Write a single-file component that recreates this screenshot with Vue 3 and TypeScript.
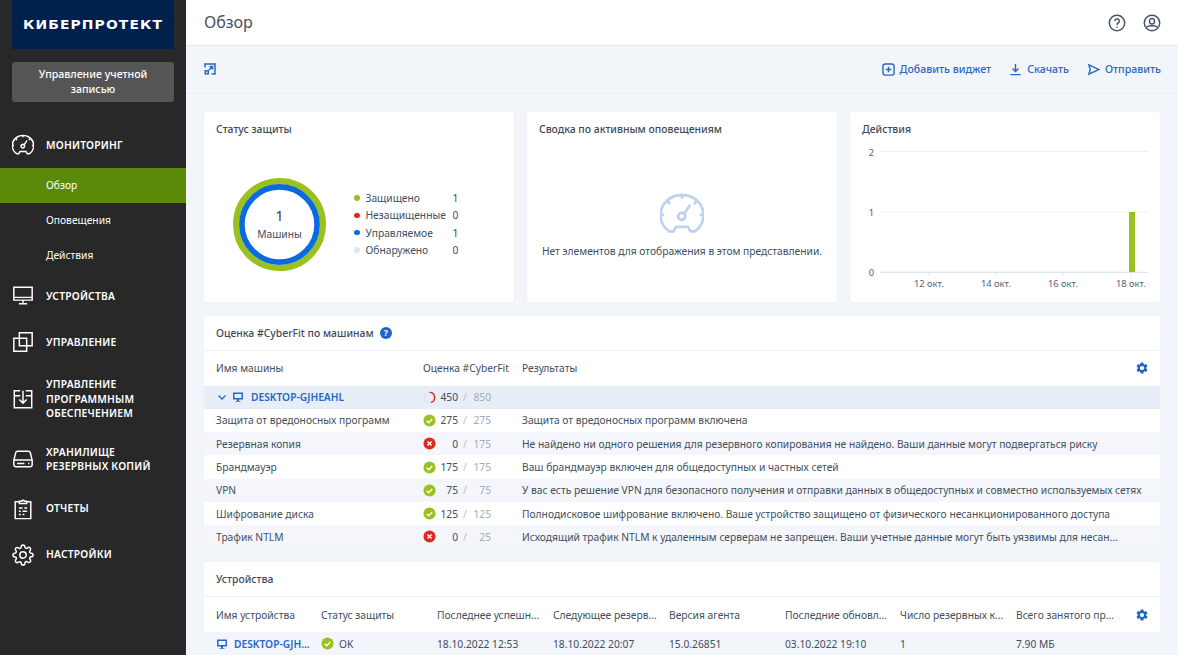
<script setup lang="ts">
const gearOutline =
  'M19.4 15a1.65 1.65 0 0 0 .33 1.82l.06.06a2 2 0 0 1 0 2.83 2 2 0 0 1-2.83 0l-.06-.06a1.65 1.65 0 0 0-1.82-.33 1.65 1.65 0 0 0-1 1.51V21a2 2 0 0 1-2 2 2 2 0 0 1-2-2v-.09A1.65 1.65 0 0 0 9 19.4a1.65 1.65 0 0 0-1.82.33l-.06.06a2 2 0 0 1-2.83 0 2 2 0 0 1 0-2.83l.06-.06a1.65 1.65 0 0 0 .33-1.82 1.65 1.65 0 0 0-1.51-1H3a2 2 0 0 1-2-2 2 2 0 0 1 2-2h.09A1.65 1.65 0 0 0 4.6 9a1.65 1.65 0 0 0-.33-1.82l-.06-.06a2 2 0 0 1 0-2.83 2 2 0 0 1 2.83 0l.06.06a1.65 1.65 0 0 0 1.82.33H9a1.65 1.65 0 0 0 1-1.51V3a2 2 0 0 1 2-2 2 2 0 0 1 2 2v.09a1.65 1.65 0 0 0 1 1.51 1.65 1.65 0 0 0 1.82-.33l.06-.06a2 2 0 0 1 2.83 0 2 2 0 0 1 0 2.83l-.06.06a1.65 1.65 0 0 0-.33 1.82V9a1.65 1.65 0 0 0 1.51 1H21a2 2 0 0 1 2 2 2 2 0 0 1-2 2h-.09a1.65 1.65 0 0 0-1.51 1z M15.5 12a3.5 3.5 0 1 1-7 0 3.5 3.5 0 0 1 7 0z'
const gearSolid =
  'M19.14 12.94c.04-.3.06-.61.06-.94 0-.32-.02-.64-.07-.94l2.03-1.58a.49.49 0 0 0 .12-.61l-1.92-3.32a.488.488 0 0 0-.59-.22l-2.39.96c-.5-.38-1.03-.7-1.62-.94l-.36-2.54a.484.484 0 0 0-.48-.41h-3.84c-.24 0-.43.17-.47.41l-.36 2.54c-.59.24-1.13.57-1.62.94l-2.39-.96c-.22-.08-.47 0-.59.22L2.74 8.87c-.12.21-.08.47.12.61l2.03 1.58c-.05.3-.09.63-.09.94s.02.64.07.94l-2.03 1.58a.49.49 0 0 0-.12.61l1.92 3.32c.12.22.37.29.59.22l2.39-.96c.5.38 1.03.7 1.62.94l.36 2.54c.05.24.24.41.48.41h3.84c.24 0 .44-.17.47-.41l.36-2.54c.59-.24 1.13-.56 1.62-.94l2.39.96c.22.08.47 0 .59-.22l1.92-3.32c.12-.22.07-.47-.12-.61l-2.01-1.58zM12 15.6c-1.98 0-3.6-1.62-3.6-3.6s1.62-3.6 3.6-3.6 3.6 1.62 3.6 3.6-1.62 3.6-3.6 3.6z'
const gauge =
  'M5 21.5C2.2 19.6.3 16 .3 12.5.3 6.5 5.5 1.5 12 1.5S23.7 6.5 23.7 12.5c0 3.5-1.9 7.1-4.7 9h-2.300L15.200 19H8.800l-1.500 2.500z M10.200 14.300a1.900 1.900 0 1 0 2.900-2.400 1.900 1.900 0 0 0-2.900 2.400z M13.200 11.900l3.300-4.900 M12 1.500v2 M.3 12.500h2 M21.700 12.500h2 M4 5l1.500 1.500 M20 5l-1.500 1.500'
const monitor = 'M2 2.500h20v14H2z M2 13.500h20 M12 16.500v4 M7.500 20.500h9'

interface NavItem {
  lines: string[]
  icon: string
  children?: { label: string; active?: boolean }[]
}

const nav: NavItem[] = [
  {
    lines: ['МОНИТОРИНГ'],
    icon: gauge,
    children: [{ label: 'Обзор', active: true }, { label: 'Оповещения' }, { label: 'Действия' }],
  },
  { lines: ['УСТРОЙСТВА'], icon: monitor },
  { lines: ['УПРАВЛЕНИЕ'], icon: 'M8 2h14v14H8z M2 8h14v14H2z' },
  {
    lines: ['УПРАВЛЕНИЕ', 'ПРОГРАММНЫМ', 'ОБЕСПЕЧЕНИЕМ'],
    icon: 'M9 3H2.500v18.500h19V3H15 M2.500 8.500H9 M15 8.500h6.500 M12 3v13 M8 12.500l4 4 4-4',
  },
  {
    lines: ['ХРАНИЛИЩЕ', 'РЕЗЕРВНЫХ КОПИЙ'],
    icon: 'M6 3.500h12c1 0 1.600.5 1.900 1.400L22 13.500v4.500a2.500 2.500 0 0 1-2.500 2.500h-15A2.500 2.500 0 0 1 2 18v-4.500l2.100-8.600C4.400 4 5 3.500 6 3.500z M2.500 13h19 M5.500 16.800h8 M17.500 16.800h1.500',
  },
  {
    lines: ['ОТЧЕТЫ'],
    icon: 'M8 4H3.500v18.500h17V4H16 M8 6V3.500h2.500a1.600 1.600 0 0 1 3 0H16V6z M7.500 11h4 M13.500 11h3 M7.500 14.500h2 M11.500 14.500h5 M7.500 18h2 M11.500 18h2',
  },
  { lines: ['НАСТРОЙКИ'], icon: gearOutline },
]

const legend = [
  { label: 'Защищено', value: 1, color: '#9ac120' },
  { label: 'Незащищенные', value: 0, color: '#e0281f' },
  { label: 'Управляемое', value: 1, color: '#0a6be0' },
  { label: 'Обнаружено', value: 0, color: '#dfe6f2' },
]

const gridY = [
  { y: 151.5, label: '2' },
  { y: 212, label: '1' },
  { y: 272, label: '0' },
]
const ticks = [
  { x: 59, label: '12 окт.' },
  { x: 126, label: '14 окт.' },
  { x: 193, label: '16 окт.' },
  { x: 261, label: '18 окт.' },
]

const checks = [
  { name: 'Защита от вредоносных программ', ok: true, score: 275, total: 275, result: 'Защита от вредоносных программ включена' },
  { name: 'Резервная копия', ok: false, score: 0, total: 175, result: 'Не найдено ни одного решения для резервного копирования не найдено. Ваши данные могут подвергаться риску' },
  { name: 'Брандмауэр', ok: true, score: 175, total: 175, result: 'Ваш брандмауэр включен для общедоступных и частных сетей' },
  { name: 'VPN', ok: true, score: 75, total: 75, result: 'У вас есть решение VPN для безопасного получения и отправки данных в общедоступных и совместно используемых сетях' },
  { name: 'Шифрование диска', ok: true, score: 125, total: 125, result: 'Полнодисковое шифрование включено. Ваше устройство защищено от физического несанкционированного доступа' },
  { name: 'Трафик NTLM', ok: false, score: 0, total: 25, result: 'Исходящий трафик NTLM к удаленным серверам не запрещен. Ваши учетные данные могут быть уязвимы для несан...' },
]

const deviceCols = [
  'Имя устройства',
  'Статус защиты',
  'Последнее успешн...',
  'Следующее резерв...',
  'Версия агента',
  'Последние обновл...',
  'Число резервных к...',
  'Всего занятого пр...',
]
</script>

<template>
  <div class="app">
    <aside class="sidebar">
      <div class="logo"><span>КИБЕРПРОТЕКТ</span></div>
      <button class="account">Управление учетной записью</button>
      <nav class="nav">
        <template v-for="item in nav" :key="item.lines[0] + item.lines.length">
          <div class="nav-item">
            <svg class="nav-icon" viewBox="0 0 24 24"><path :d="item.icon" /></svg>
            <div class="nav-label">
              <div v-for="line in item.lines" :key="line">{{ line }}</div>
            </div>
          </div>
          <div
            v-for="child in item.children"
            :key="child.label"
            class="nav-child"
            :class="{ active: child.active }"
          >
            {{ child.label }}
          </div>
        </template>
      </nav>
    </aside>

    <main class="main">
      <header class="topbar">
        <h1 class="page-title">Обзор</h1>
        <div class="top-icons">
          <svg class="top-icon" viewBox="0 0 18 18">
            <circle cx="9" cy="9" r="7.700" />
            <path d="M6.700 7a2.300 2.300 0 1 1 3.500 2c-.8.500-1.200 1-1.200 1.900" />
            <path d="M9 12.600v1.200" />
          </svg>
          <svg class="top-icon" viewBox="0 0 18 18">
            <circle cx="9" cy="9" r="7.700" />
            <path d="M6.500 7a2.500 2.500 0 1 1 5 0c0 1.800-1 3-2.500 3S6.500 8.800 6.500 7z" />
            <path d="M3.500 13.500c.6-1.200 2-1.500 3.500-1.700h4c1.500.2 2.900.5 3.500 1.700" />
          </svg>
        </div>
      </header>

      <div class="toolbar">
        <svg class="expand" viewBox="0 0 12 12">
          <path d="M1 4.500V1h10v10H7.500" />
          <path d="M5 7l3.500-3.500 M5.500 3.500h3v3" />
          <path class="solid" d="M.500 7h4.500v4.500H.500z M2 8.500v1.500h1.500V8.500z" />
        </svg>
        <div class="actions">
          <a class="action">
            <svg viewBox="0 0 14 14"><rect x="1" y="1" width="12" height="12" rx="2.500" /><path d="M7 4v6 M4 7h6" /></svg>
            Добавить виджет
          </a>
          <a class="action">
            <svg viewBox="0 0 14 14"><path d="M7 1v8 M3.800 6L7 9.200 10.200 6 M1.500 12.500h11" /></svg>
            Скачать
          </a>
          <a class="action">
            <svg viewBox="0 0 14 14"><path d="M2 2l11 5-11 5 1.500-5z" /></svg>
            Отправить
          </a>
        </div>
      </div>

      <div class="content">
        <div class="widgets">
          <section class="card">
            <h2 class="card-title">Статус защиты</h2>
            <div class="status-body">
              <div class="donut">
                <svg viewBox="0 0 93 93">
                  <circle cx="46.500" cy="46.500" r="43.400" fill="none" stroke="#9ac120" stroke-width="6.200" />
                  <circle cx="46.500" cy="46.500" r="37.600" fill="none" stroke="#0a6be0" stroke-width="5.600" />
                </svg>
                <div class="donut-text">
                  <span class="donut-num">1</span>
                  <span>Машины</span>
                </div>
              </div>
              <ul class="legend">
                <li v-for="row in legend" :key="row.label">
                  <i class="dot" :style="{ background: row.color }"></i>
                  <span class="legend-label">{{ row.label }}</span>
                  <span>{{ row.value }}</span>
                </li>
              </ul>
            </div>
          </section>

          <section class="card">
            <h2 class="card-title">Сводка по активным оповещениям</h2>
            <div class="empty">
              <svg viewBox="0 0 24 24"><path :d="gauge" /></svg>
              <p>Нет элементов для отображения в этом представлении.</p>
            </div>
          </section>

          <section class="card">
            <h2 class="card-title">Действия</h2>
            <svg class="chart" viewBox="0 0 310 156">
              <g v-for="g in gridY" :key="g.label">
                <line x1="30" :y1="g.y - 146" x2="298" :y2="g.y - 146" class="grid-line" />
                <text x="24" :y="g.y - 142" text-anchor="end">{{ g.label }}</text>
              </g>
              <line x1="30" y1="126.500" x2="298" y2="126.500" class="axis" />
              <rect x="279" y="66" width="6" height="60" fill="#9ac120" />
              <g v-for="t in ticks" :key="t.label">
                <line :x1="t.x + 20" y1="126" :x2="t.x + 20" y2="130" class="axis" />
                <text :x="t.x + 20" y="141" text-anchor="middle">{{ t.label }}</text>
              </g>
            </svg>
          </section>
        </div>

        <section class="card table-card">
          <h2 class="table-title">
            Оценка #CyberFit по машинам
            <svg class="help" viewBox="0 0 12 12">
              <circle cx="6" cy="6" r="6" fill="#1f66c4" />
              <text x="6" y="9" text-anchor="middle">?</text>
            </svg>
          </h2>
          <div class="fit-row fit-head">
            <span>Имя машины</span>
            <span>Оценка #CyberFit</span>
            <span>Результаты</span>
            <svg class="gear" viewBox="0 0 24 24"><path :d="gearSolid" /></svg>
          </div>
          <div class="fit-row fit-machine">
            <span class="machine-name">
              <svg class="chevron" viewBox="0 0 10 10"><path d="M1.500 3.500L5 7l3.500-3.500" /></svg>
              <svg class="pc" viewBox="0 0 24 24"><path d="M2 3h20v14H2z M5 6v8h14V6z M10 17h4v3h3v1.500H7V20h3z" /></svg>
              DESKTOP-GJHEAHL
            </span>
            <span class="score">
              <svg class="status" viewBox="0 0 14 14">
                <circle cx="7" cy="7" r="5.500" fill="none" stroke="#dbe3f0" stroke-width="1.500" />
                <path d="M7 1.500a5.500 5.500 0 0 1 1.500 10.800" fill="none" stroke="#e0281f" stroke-width="1.500" />
              </svg>
              <b>450</b><i>/</i><em>850</em>
            </span>
            <span></span>
          </div>
          <div v-for="c in checks" :key="c.name" class="fit-row fit-check">
            <span>{{ c.name }}</span>
            <span class="score">
              <svg class="status" viewBox="0 0 14 14">
                <circle cx="7" cy="7" r="6.500" :fill="c.ok ? '#9ac120' : '#e0281f'" />
                <path v-if="c.ok" d="M4 7.200l2.200 2.200L10 5.500" class="mark" />
                <path v-else d="M4.800 4.800l4.400 4.400 M9.200 4.800l-4.400 4.400" class="mark" />
              </svg>
              <b>{{ c.score }}</b><i>/</i><em>{{ c.total }}</em>
            </span>
            <span class="result">{{ c.result }}</span>
          </div>
        </section>

        <section class="card table-card">
          <h2 class="table-title">Устройства</h2>
          <div class="dev-row dev-head">
            <span v-for="col in deviceCols" :key="col">{{ col }}</span>
            <svg class="gear" viewBox="0 0 24 24"><path :d="gearSolid" /></svg>
          </div>
          <div class="dev-row dev-item">
            <span class="dev-name">
              <svg class="pc" viewBox="0 0 24 24"><path d="M2 3h20v14H2z M5 6v8h14V6z M10 17h4v3h3v1.500H7V20h3z" /></svg>
              DESKTOP-GJH...
            </span>
            <span class="dev-status">
              <svg class="status" viewBox="0 0 14 14">
                <circle cx="7" cy="7" r="6.500" fill="#9ac120" />
                <path d="M4 7.200l2.200 2.200L10 5.500" class="mark" />
              </svg>
              OK
            </span>
            <span>18.10.2022 12:53</span>
            <span>18.10.2022 20:07</span>
            <span>15.0.26851</span>
            <span>03.10.2022 19:10</span>
            <span>1</span>
            <span>7.90 МБ</span>
          </div>
        </section>
      </div>
    </main>
  </div>
</template>

<style>
html,
body {
  margin: 0;
  overflow: hidden;
}
</style>

<style scoped>
.app {
  display: flex;
  width: 100vw;
  height: 100vh;
  overflow: hidden;
  font-family: 'Noto Sans', 'Open Sans', sans-serif;
  font-size: 10.25px;
  color: #414e5c;
  background: #f2f5fa;
}

.sidebar {
  flex: 0 0 186px;
  background: #282828;
  color: #fff;
}
.logo {
  height: 49px;
  margin: 0 12px;
  background: #00204e;
  display: flex;
  align-items: center;
  justify-content: center;
  font-family: 'DejaVu Sans', sans-serif;
  font-weight: 700;
  font-size: 12.300px;
  letter-spacing: 1px;
}
.logo span {
  transform: scaleX(1.13);
}
.account {
  display: block;
  width: 162px;
  height: 40px;
  margin: 13px 12px 20px;
  padding: 0 20px;
  border: 0;
  border-radius: 3px;
  background: #555;
  color: #fff;
  font: inherit;
  font-size: 10.600px;
  font-weight: 500;
  line-height: 15.500px;
}
.nav-item {
  display: flex;
  align-items: center;
  gap: 12px;
  min-height: 46px;
  padding: 12px 0 12px 12px;
  box-sizing: border-box;
}
.nav-icon {
  flex: 0 0 22px;
  width: 22px;
  height: 22px;
  fill: none;
  stroke: #fff;
  stroke-width: 1.600;
}
.nav-label {
  font-weight: 600;
  font-size: 10.300px;
  line-height: 14.500px;
  letter-spacing: 0.2px;
}
.nav-child {
  height: 35px;
  line-height: 35px;
  padding-left: 46px;
}
.nav-child.active {
  background: #5b8a0b;
}

.main {
  flex: 1;
  min-width: 0;
  display: flex;
  flex-direction: column;
}
.topbar {
  flex: 0 0 45px;
  display: flex;
  align-items: center;
  justify-content: space-between;
  padding: 0 17px 0 18px;
  background: #fff;
  border-bottom: 1px solid #e3e7ee;
}
.page-title {
  margin: 0 0 2px;
  font-size: 16px;
  font-weight: 400;
  color: #45505c;
}
.top-icons {
  display: flex;
  gap: 17px;
}
.top-icon {
  width: 18px;
  height: 18px;
  fill: none;
  stroke: #4a5563;
  stroke-width: 1.500;
}

.toolbar {
  flex: 0 0 48px;
  display: flex;
  align-items: center;
  justify-content: space-between;
  padding: 0 17px 1px 18px;
  box-sizing: border-box;
  border-bottom: 1px solid #e8edf5;
}
.expand {
  width: 12px;
  height: 12px;
  fill: none;
  stroke: #2668c5;
  stroke-width: 1.500;
}
.expand .solid {
  stroke: none;
  fill: #2668c5;
  fill-rule: evenodd;
}
.actions {
  display: flex;
  gap: 18px;
}
.action {
  display: flex;
  align-items: center;
  gap: 5px;
  color: #2668c5;
  font-size: 10.600px;
  font-weight: 500;
}
.action svg {
  width: 13px;
  height: 13px;
  fill: none;
  stroke: #2668c5;
  stroke-width: 1.500;
}

.content {
  flex: 1;
  min-height: 0;
  overflow: hidden;
  padding: 18px 18px 0;
  display: flex;
  flex-direction: column;
  gap: 13.500px;
}
.widgets {
  display: grid;
  grid-template-columns: repeat(3, 1fr);
  gap: 13px;
  flex: 0 0 190px;
}
.card {
  background: #fff;
  border-radius: 2px;
  box-shadow: 0 0 1px rgba(60, 90, 140, 0.12);
  display: flex;
  flex-direction: column;
  min-width: 0;
}
.card-title {
  flex: 0 0 34px;
  margin: 0;
  padding: 0 12px;
  line-height: 34px;
  font-size: 10.400px;
  font-weight: 500;
  color: #3f4a56;
}
.status-body {
  flex: 1;
  display: flex;
  align-items: center;
  gap: 28px;
  padding-left: 29px;
}
.donut {
  position: relative;
  width: 93px;
  height: 93px;
}
.donut svg {
  display: block;
}
.donut-text {
  position: absolute;
  inset: 0;
  display: flex;
  flex-direction: column;
  align-items: center;
  justify-content: center;
  gap: 3px;
}
.donut-num {
  font-size: 14px;
  line-height: 17px;
  color: #2f3a46;
}
.legend {
  list-style: none;
  margin: 0;
  padding: 0;
}
.legend li {
  display: flex;
  align-items: center;
  height: 17.400px;
}
.dot {
  width: 5.500px;
  height: 5.500px;
  border-radius: 50%;
  margin-right: 6px;
}
.legend-label {
  width: 87px;
}
.empty {
  flex: 1;
  display: flex;
  flex-direction: column;
  align-items: center;
  padding-top: 46px;
}
.empty svg {
  width: 44px;
  height: 44px;
  fill: none;
  stroke: #bcd2ee;
  stroke-width: 1.500;
}
.empty p {
  margin: 8px 0 0;
}
.chart {
  flex: 1;
  width: 100%;
  display: block;
  font-size: 9.300px;
}
.chart text {
  fill: #56616d;
}
.grid-line {
  stroke: #eef2f8;
  stroke-width: 1;
}
.axis {
  stroke: #dfe5ee;
  stroke-width: 1;
}

.table-card {
  flex: 0 0 auto;
}
.table-title {
  margin: 0;
  height: 34px;
  padding: 0 12px;
  display: flex;
  align-items: center;
  gap: 6px;
  font-size: 10.400px;
  font-weight: 500;
  color: #3f4a56;
  border-bottom: 1px solid #eef2f8;
}
.help {
  width: 12px;
  height: 12px;
}
.help text {
  fill: #fff;
  font-size: 9px;
  font-weight: 700;
}
.fit-row {
  display: grid;
  grid-template-columns: 207px 99px 1fr;
  align-items: center;
  padding: 0 12px;
  height: 23.300px;
  position: relative;
}
.fit-head {
  height: 35px;
}
.gear {
  position: absolute;
  right: 11px;
  top: 50%;
  width: 14px;
  height: 14px;
  margin-top: -7px;
  fill: #1f66c4;
}
.fit-machine {
  background: #e8eef8;
  padding-left: 0;
  grid-template-columns: 219px 99px 1fr;
}
.machine-name {
  display: flex;
  align-items: center;
  padding-left: 13px;
  color: #2668c5;
  font-weight: 600;
  width: 206px;
  box-sizing: border-box;
}
.chevron {
  width: 10px;
  height: 10px;
  fill: none;
  stroke: #2668c5;
  stroke-width: 1.300;
  margin-right: 5px;
}
.pc {
  width: 12px;
  height: 12px;
  fill: #2668c5;
  fill-rule: evenodd;
  margin-right: 6px;
}
.fit-machine .pc {
  margin-right: 7px;
}
.fit-check:nth-child(odd) {
  background: #f4f6fb;
}
.score {
  display: flex;
  align-items: center;
}
.status {
  flex: 0 0 13px;
  width: 13px;
  height: 13px;
}
.mark {
  fill: none;
  stroke: #fff;
  stroke-width: 1.500;
}
.score b {
  width: 22px;
  text-align: right;
  font-weight: 400;
}
.score i {
  width: 14px;
  text-align: center;
  font-style: normal;
  color: #b8bec7;
}
.score em {
  width: 19px;
  text-align: right;
  font-style: normal;
  color: #a4abb5;
}
.result {
  white-space: nowrap;
}

.dev-row {
  display: grid;
  grid-template-columns: 105px 116px 116px 116px 116px 115px 116px 1fr;
  align-items: center;
  padding: 0 12px;
  position: relative;
  white-space: nowrap;
}
.dev-head {
  height: 35px;
}
.dev-item {
  height: 23px;
  background: #f2f5fa;
}
.dev-name {
  display: flex;
  align-items: center;
  color: #2668c5;
  font-weight: 600;
}
.dev-status {
  display: flex;
  align-items: center;
  gap: 5px;
}
</style>
